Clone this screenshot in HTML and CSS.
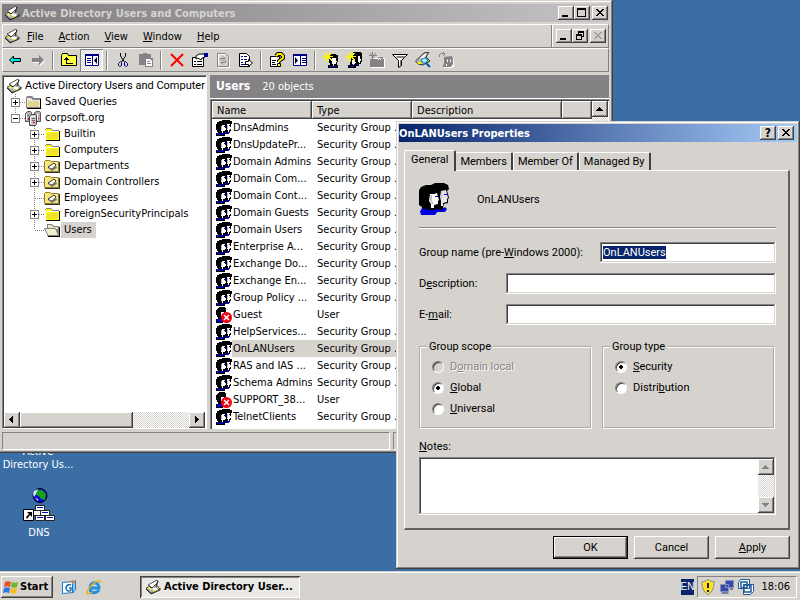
FILE: index.html
```html
<!DOCTYPE html>
<html lang="en">
<head>
<meta charset="utf-8">
<title>Active Directory Users and Computers</title>
<link rel="stylesheet" href="styles.css">
</head>
<body>
<svg class="sprites" aria-hidden="true">
  <symbol id="heads" viewBox="0 0 32 32">
    <path fill="#000" d="M12 2l4-2h9l4 2 1 4-2 2 1 3 1 4-1 1v4l-4 1-1 3 2 3-8 2-16 1 1-6-3-2-1-3V9l3-5 5-2z"/>
    <path fill="#fff" d="M11 11h4l3-1 1 4 1 3-1 1v3l-4 1v3h-3v-4l-2-3z"/>
    <path fill="#e7e3e7" d="M22 8l5-1 1 4 1 4-1 1v3l-4 1v3h-2v-5l-1-4z"/>
    <path fill="#c6c3c6" d="M11 12h2v6l2 3h-2l-2-4zM22 9h1v7h-1z"/>
    <path fill="#0000e0" d="M16 13h3v1h-3zM25 11h3v1h-3zM1 28l3-3 5 2h6l3-1 1 2-3 4H2zM19 26l4 1 3-3 2 2-2 3h-7z"/>
  </symbol>
  <symbol id="heads-small" viewBox="0 0 16 16">
    <path fill="#000" d="M3 1h3V0h8v1h2v3h-1v7h-1v2h-1v1H9v2H0v-3h2v-1H1v-2H0V4h1V2h2z"/>
    <path fill="#fff" d="M5 6h1V5h3v3h1v2H9v1H7v2H6v-2H5zM11 4h3v3h1v2h-1v1h-1v2h-1v-2h-1z"/>
    <path fill="#b5b6c6" d="M5 6h1v4H5zM11 5h1v4h-1z"/>
    <path fill="#0000d0" d="M1 13h2v1h3v-1h2v1H7v1H1zM8 6h1v1H8zM13 5h1v1h-1zM9 12h1v1H9zM10 13h1v-1h3v1h-1v1h-3z"/>
  </symbol>
  <symbol id="user-off" viewBox="0 0 16 16">
    <path fill="#000" d="M2 1h1V0h6v1h1v4H9v3H8v3H7v5H0v-4h2v-2H1V8H0V3h1V2h1z"/><path fill="#fff" d="M5 5h3v3H7v3H6V9H5z"/><path fill="#00c" d="M1 12h5v3H1z"/>
    <circle cx="10.500" cy="10.500" r="5.500" fill="#f00010"/><path stroke="#fff" stroke-width="1.500" d="M8 8l5 5M13 8l-5 5"/>
  </symbol>
  <symbol id="star" viewBox="0 0 10 10">
    <path fill="#f7f700" d="M4 0h1v3h1V2h1V1h2v1H8v1H7v1h3v1H7v1h1v1h1v2H8V8H7V7H6V6H5v4H4V7H3v1H2v1H1V8h1V7h1V6H0V4h3V3H2V2H1V1h1v1h2z"/>
  </symbol>
  <symbol id="aduc" viewBox="0 0 16 16">
    <path fill="#b5b6b5" stroke="#63615a" d="M1 9l5 5 9-4-4-5z"/>
    <path fill="#f5f24a" d="M3 9l4-3 2 2-4 3zM8 12l4-2 1 1-5 2z"/>
    <path fill="#fff" stroke="#555" d="M3 6l9-5 1 2-6 6z"/>
    <path stroke="#222" fill="none" d="M1 10l5 5 9-4V9M4 7l5 3M13 2l-2 6"/>
    <path fill="#fff" d="M7 9h5v2H8z"/>
  </symbol>
  <symbol id="folder" viewBox="0 0 16 16">
    <path fill="#848284" d="M2 2h5l2 2h6v1h1v9H1V3h1z"/><path fill="#000" d="M15 5h1v10H2v-1h13z"/>
    <path fill="#ffff00" d="M2 3h5l2 2h6v9H1V4z"/><path fill="#fff" d="M1 5h13v1H2v8H1z"/><path fill="#efe330" d="M3 7h11v6H3z"/>
  </symbol>
  <symbol id="folder-open" viewBox="0 0 16 16">
    <path fill="#848284" d="M3 2h5l2 2h5v10H3z"/><path fill="#f3f0cf" d="M1 7h11l3 7H4z"/><path fill="#e7e3c8" d="M4 3h4l1 2h5v2H4z"/><path fill="none" stroke="#848284" d="M.5 6.500h11l3 7H4z"/><path stroke="#000" d="M4 14.500h12M15.500 5v9"/>
  </symbol>
  <symbol id="folder-gray" viewBox="0 0 16 16">
    <path fill="#848284" d="M2 2h5l2 2h7v10H1V4z"/><path fill="#eeeadd" d="M2 4h4l2 2h7v7H2z"/><path fill="#ded78c" d="M3 7h11v6H3z"/><path stroke="#000" d="M2 14.500h14M15.500 5v9"/>
  </symbol>
  <symbol id="ou" viewBox="0 0 16 16">
    <path fill="#f7e77b" stroke="#8a7d30" d="M.5 3.500l1-1h4l2 1h7v10H.5z"/><path fill="#333" d="M1 14h15v1H1zM15 4h1v10h-1z"/>
    <path fill="#fff" stroke="#333" d="M4 9l6-4 2 2-4 5z"/><path fill="#777" d="M4 10l4 3 5-3-1-2-4 2z"/>
  </symbol>
  <symbol id="domain" viewBox="0 0 16 16">
    <path fill="#b5b2b5" stroke="#555" d="M.5 3.500l2-2h3l1 1v9h-6zM9.500 2.500l2-1h3l1 1v9h-6z"/>
    <path fill="#c6c3c6" stroke="#444" d="M4.500 6.500l2-2h4l1 1v9l-1 1h-6z"/>
    <path stroke="#fff" d="M1.500 4v6M5.500 7v7M12.500 4v6M6 6.500h4"/><path stroke="#666" d="M7 8.500h3M7 10.500h3M2 5.500h2"/><path fill="#e00" d="M3 8h1v2H3zM8 12h2v1H8zM13 8h1v1h-1z"/>
  </symbol>
  <symbol id="t-plus" viewBox="0 0 19 16">
    <path class="dots" d="M9.500 0v16M10 8.500h9"/><path class="box" d="M5.500 4.500h8v8h-8z"/><path class="sign" d="M7 8.500h5M9.500 6v5"/>
  </symbol>
  <symbol id="t-minus" viewBox="0 0 19 16">
    <path class="dots" d="M9.500 0v8M10 8.500h9"/><path class="box" d="M5.500 4.500h8v8h-8z"/><path class="sign" d="M7 8.500h5"/>
  </symbol>
  <symbol id="t-line" viewBox="0 0 19 16"><path class="dots" d="M9.500 0v16M10 8.500h9"/></symbol>
  <symbol id="t-last" viewBox="0 0 19 16"><path class="dots" d="M9.500 0v8M10 8.500h9"/></symbol>
  <symbol id="min" viewBox="0 0 12 10"><path fill="#000" d="M2 7h6v2H2z"/></symbol>
  <symbol id="max" viewBox="0 0 12 10"><path fill="#000" fill-rule="evenodd" d="M1 0h9v9H1zM2 2v6h7V2z"/></symbol>
  <symbol id="restore" viewBox="0 0 12 10"><path fill="#000" fill-rule="evenodd" d="M4 0h6v6H8v3H2V3h2zM5 2v1h3v2h1V2zM3 5v3h4V5z"/></symbol>
  <symbol id="close" viewBox="0 0 12 10"><path fill="currentColor" d="M2 1h2v1h1v1h2V2h1V1h2v1H9v1H8v1H7v1h1v1h1v1h1v1H8V7H7V6H5v1H4v1H2V7h1V6h1V5h1V4H4V3H3V2H2z"/></symbol>
  <symbol id="up" viewBox="0 0 8 8"><path fill="currentColor" d="M3 2h1v1h1v1h1v1h1v1H0V5h1V4h1V3h1z"/></symbol>
  <symbol id="down" viewBox="0 0 8 8"><path fill="currentColor" d="M0 2h7v1H6v1H5v1H4v1H3V5H2V4H1V3H0z"/></symbol>
  <symbol id="left" viewBox="0 0 8 8"><path fill="currentColor" d="M5 0v7H4V6H3V5H2V4H1V3h1V2h1V1h1V0z"/></symbol>
  <symbol id="right" viewBox="0 0 8 8"><path fill="currentColor" d="M2 0v7h1V6h1V5h1V4h1V3H5V2H4V1H3V0z"/></symbol>
</svg>

<main class="desktop">
  <a class="shortcut shortcut-ad" href="#ad">Active<br>Directory Us...</a>
  <a class="shortcut shortcut-dns" href="#dns">
    <svg width="32" height="34" viewBox="0 0 32 34">
      <circle cx="17" cy="7.500" r="7" fill="#1010d0" stroke="#001" /><path fill="#18a018" d="M14 2h5l4 4-1 6-4-1-2-3-3-1z"/><path fill="#cfeaff" d="M11 3l4-2-2 5-2 3-1-3zM12 10l3 1v2z"/>
      <path fill="#fff" stroke="#222" d="M12.500 17.500h9v5h-9zM8.500 22.500h9v5h-9zM17.500 22.500h9v5h-9zM12.500 27.500h9v5h-9zM22.500 27.500h9v5h-9z"/><path stroke="#0808a0" d="M14 19.500h6M19 24.500h6M14 29.500h6M24 29.500h6"/>
      <path fill="#fff" stroke="#000" d="M.5 21.500h10v11H.5z"/><path fill="#000" d="M4 24h5v5l-2-2-3 4-1-2 3-3z"/>
    </svg>
    DNS
  </a>

  <section class="window console" aria-label="Active Directory Users and Computers">
    <header class="titlebar inactive">
      <svg class="i16"><use href="#aduc"/></svg>
      <h1>Active Directory Users and Computers</h1>
      <button class="cap" aria-label="Minimize"><svg><use href="#min"/></svg></button>
      <button class="cap" aria-label="Maximize"><svg><use href="#max"/></svg></button>
      <button class="cap gap" aria-label="Close"><svg><use href="#close"/></svg></button>
    </header>
    <div class="band">
      <nav class="menu">
        <svg class="i16"><use href="#aduc"/></svg>
        <button><u>F</u>ile</button><button><u>A</u>ction</button><button><u>V</u>iew</button><button><u>W</u>indow</button><button><u>H</u>elp</button>
      </nav>
      <div class="mdi">
        <button class="cap" aria-label="Minimize child"><svg><use href="#min"/></svg></button>
        <button class="cap" aria-label="Restore child"><svg><use href="#restore"/></svg></button>
        <button class="cap gap" aria-label="Close child" disabled><svg><use href="#close"/></svg></button>
      </div>
    </div>
    <div class="band toolbar">
      <button aria-label="Back"><svg class="i16" viewBox="0 0 16 16"><path fill="#00e7e7" stroke="#000" d="M2.500 8l4-4v2.500h7v3h-7V12z"/></svg></button>
      <button aria-label="Forward"><svg class="i16" viewBox="0 0 16 16"><path fill="#fff" d="M15 9l-5 5v-3H3V7h7V5z"/><path fill="#848284" d="M14 8L9 3v3H2v4h7v3z"/></svg></button>
      <i></i>
      <button aria-label="Up one level"><svg class="i16" viewBox="0 0 16 16"><path fill="#ffff42" stroke="#000" d="M.5 3.500l1-2h5l1 2h8v10H.5z"/><path fill="#000" d="M5 5h1v1h1v1h1v1H6v3h6v1H5V8H3V7h1V6h1z"/></svg></button>
      <button class="pressed" aria-label="Show console tree" aria-pressed="true"><svg class="i16" viewBox="0 0 16 16"><path fill="#fff" stroke="#000084" d="M1.500 2.500h13v11h-13z"/><path fill="#000084" d="M1 2h14v2H1zM8 4h1v10H8zM3 6h4v1H3zM3 8h4v1H3zM3 10h4v1H3z"/><path d="M13 5v7L10 8.500z"/></svg></button>
      <i></i>
      <button aria-label="Cut"><svg class="i16" viewBox="0 0 16 16"><path fill="none" stroke="#000" d="M5.500 1v3l4 6M10.500 1v3l-4 6"/><path fill="none" stroke="#000084" d="M3.500 11.500l2-2 1 1v3l-2 1-1-1zM9.500 10.500l1-1 2 2v2l-1 1-2-1z"/></svg></button>
      <button aria-label="Paste" disabled><svg class="i16" viewBox="0 0 16 16"><path fill="#848284" d="M1 2h4V1h4v1h4v4h2v9H7v-2H1z"/><path fill="#fff" d="M8 7h4l2 2v5H8z"/><path stroke="#848284" d="M9 9.500h3M9 11.500h4"/></svg></button>
      <i></i>
      <button aria-label="Delete"><svg class="i16" viewBox="0 0 16 16"><path stroke="#f00" stroke-width="2" d="M2 2l12 12M14 2L2 14"/></svg></button>
      <button aria-label="Properties"><svg class="i16" viewBox="0 0 16 16"><path fill="#fff" stroke="#000" d="M.5 5.500h11v9H.5z"/><path stroke="#000" d="M2 9.500h2M5 9.500h5M2 12.500h2M5 12.500h5"/><path fill="#fff" stroke="#000" d="M4 4l3-2h5l1 3-3 1-1 2-3-2-2 1z"/><path fill="#0000a0" d="M12 1h4v4h-4z"/></svg></button>
      <button aria-label="Refresh" disabled><svg class="i16" viewBox="0 0 16 16"><path fill="none" stroke="#fff" d="M3.500 2.500h8l3 3v10h-11z"/><path fill="none" stroke="#848284" d="M2.500 1.500h8l3 3v10h-11zM5.500 8V6.500h4M10.500 8v2.500h-4M8 4.500l2 2-2 2M8 8.500l-2 2 2 2"/></svg></button>
      <button aria-label="Export list"><svg class="i16" viewBox="0 0 16 16"><path fill="#fff" stroke="#000" d="M1.500 1.500h7l3 3v10h-10z"/><path stroke="#000084" d="M3 4.500h2M6 4.500h3M3 7.500h2M6 7.500h3M3 10.500h2M3 12.500h5"/><path fill="#fff" stroke="#000" d="M7.500 9.500h3v-2l4 3.500-4 3.500v-2h-3z"/></svg></button>
      <i></i>
      <button aria-label="Help"><svg class="i16" viewBox="0 0 16 16"><path fill="#fff" stroke="#000" d="M1.500 4.500h9v10h-9z"/><path stroke="#000" d="M3 8.500h4M3 10.500h3M3 12.500h4"/><path fill="none" stroke="#000" stroke-width="4" d="M7 4l2-2h3l2 2v2l-4 3v1"/><path fill="none" stroke="#ffef00" stroke-width="2" d="M7 4l2-2h3l2 2v2l-4 3v1"/><path fill="#ff0" stroke="#000" d="M8.500 11.500h3v3h-3z"/></svg></button>
      <button aria-label="Show action pane"><svg class="i16" viewBox="0 0 16 16"><path fill="#fff" stroke="#000084" d="M1.500 2.500h13v11h-13z"/><path fill="#000084" d="M1 2h14v2H1zM8 4h1v10H8zM10 6h4v1h-4zM10 8h4v1h-4zM10 10h4v1h-4z"/><path d="M3 5v7l3-3.500z"/></svg></button>
      <i></i>
      <button aria-label="New user"><svg class="i16" viewBox="0 0 16 16"><path d="M6 2h7v1h2v7h-1v3h1v3H5v-3h2v-2H6z"/><path fill="#fff" d="M9 6h4v3h1v1h-1v2h-2v2h-1v-2H9z"/><path fill="#0000c0" d="M6 14h4v1h1v-1h3v1H6z"/><use href="#star" width="10" height="10"/></svg></button>
      <button aria-label="New group"><svg class="i16" viewBox="0 0 16 16"><path d="M7 0h8v1h1v9h-1v2h-2v2h-3v2H2v-3h2V5h3z"/><path fill="#fff" d="M12 4h2v3h1v2h-1v2h-1v-1h-1zM6 8h3v2h1v1H9v1H8v1H7v-1H6z"/><path fill="#0000c0" d="M3 14h5v1H3zM10 12h3v1h-3z"/><use href="#star" width="10" height="10"/></svg></button>
      <button aria-label="New organizational unit" disabled><svg class="i16" viewBox="0 0 16 16"><path fill="#fff" d="M5 6h11v10H2v-1h3z"/><path fill="#848284" d="M1 7h8l1-2h4v2h1v8H1zM3 0h1v8H3zM0 3h8v1H0z"/><path stroke="#848284" d="M1 1l5 5M7 1L2 6"/><path stroke="#fff" fill="none" d="M9 8l2-2 1 2"/></svg></button>
      <button aria-label="Filter"><svg class="i16" viewBox="0 0 16 16"><path fill="#fff" stroke="#000" d="M.5 2.500h15l-6 6v5l-3 2v-7z"/><path fill="#848284" d="M8 8h1v6H8zM4 4h10l-2 2H5z"/></svg></button>
      <button aria-label="Find"><svg class="i16" viewBox="0 0 16 16"><path fill="#b5b6b5" stroke="#333" d="M.5 9L9 1l5-1-3 5 4 4-7 4-5-1z"/><path fill="#fff" d="M5 6l5-4 2-1-3 5z"/><path fill="#ffe600" d="M2 10h5v2H3z"/><path fill="#aef" stroke="#07a" d="M6.500 8l2-2h3l1 3-2 2h-3z"/><path stroke="#0050d0" stroke-width="2" d="M11 11l4 4"/></svg></button>
      <button aria-label="Add to group" disabled><svg class="i16" viewBox="0 0 16 16"><path fill="#fff" d="M7 5h8v2h1v8h-2v1H6v-2h1z"/><path fill="none" stroke="#848284" d="M1.500 5V2.500l2-1h3M5 0l2 2-2 2"/><path fill="#848284" d="M6 5l8-1 1 3v5l-2 3H5v-2l1-1z"/><path fill="#fff" d="M9 8l1-1v3H9zM12 8l1-1v3h-1zM8 12h1v2H8z"/></svg></button>
    </div>

    <div class="panes">
      <div class="tree-pane">
        <ul class="tree">
          <li class="root"><svg class="i16"><use href="#aduc"/></svg><span>Active Directory Users and Computer</span></li>
          <li><svg class="tl"><use href="#t-plus"/></svg><svg class="i16"><use href="#folder-gray"/></svg><span>Saved Queries</span></li>
          <li><svg class="tl"><use href="#t-minus"/></svg><svg class="i16"><use href="#domain"/></svg><span>corpsoft.org</span></li>
        </ul>
        <ul class="tree sub">
          <li><svg class="tl"><use href="#t-plus"/></svg><svg class="i16"><use href="#folder"/></svg><span>Builtin</span></li>
          <li><svg class="tl"><use href="#t-plus"/></svg><svg class="i16"><use href="#folder"/></svg><span>Computers</span></li>
          <li><svg class="tl"><use href="#t-plus"/></svg><svg class="i16"><use href="#ou"/></svg><span>Departments</span></li>
          <li><svg class="tl"><use href="#t-plus"/></svg><svg class="i16"><use href="#ou"/></svg><span>Domain Controllers</span></li>
          <li><svg class="tl"><use href="#t-line"/></svg><svg class="i16"><use href="#ou"/></svg><span>Employees</span></li>
          <li><svg class="tl"><use href="#t-plus"/></svg><svg class="i16"><use href="#folder"/></svg><span>ForeignSecurityPrincipals</span></li>
          <li><svg class="tl"><use href="#t-last"/></svg><svg class="i16"><use href="#folder-open"/></svg><span class="selected">Users</span></li>
        </ul>
        <div class="hscroll">
          <button aria-label="Scroll left"><svg class="arrow"><use href="#left"/></svg></button>
          <div class="thumb"></div>
          <button aria-label="Scroll right"><svg class="arrow"><use href="#right"/></svg></button>
        </div>
      </div>
      <div class="list-pane">
        <div class="list-title"><strong>Users</strong><span>20 objects</span></div>
        <div class="list-box">
          <table>
            <colgroup><col class="c-icon"><col class="c-name"><col class="c-type"><col class="c-desc"><col></colgroup>
            <thead><tr><th colspan="2">Name</th><th>Type</th><th>Description</th><th></th></tr></thead>
            <tbody>
              <tr><td><svg class="i16"><use href="#heads-small"/></svg></td><td>DnsAdmins</td><td>Security Group ...</td></tr>
              <tr><td><svg class="i16"><use href="#heads-small"/></svg></td><td>DnsUpdatePr...</td><td>Security Group ...</td></tr>
              <tr><td><svg class="i16"><use href="#heads-small"/></svg></td><td>Domain Admins</td><td>Security Group ...</td></tr>
              <tr><td><svg class="i16"><use href="#heads-small"/></svg></td><td>Domain Com...</td><td>Security Group ...</td></tr>
              <tr><td><svg class="i16"><use href="#heads-small"/></svg></td><td>Domain Cont...</td><td>Security Group ...</td></tr>
              <tr><td><svg class="i16"><use href="#heads-small"/></svg></td><td>Domain Guests</td><td>Security Group ...</td></tr>
              <tr><td><svg class="i16"><use href="#heads-small"/></svg></td><td>Domain Users</td><td>Security Group ...</td></tr>
              <tr><td><svg class="i16"><use href="#heads-small"/></svg></td><td>Enterprise A...</td><td>Security Group ...</td></tr>
              <tr><td><svg class="i16"><use href="#heads-small"/></svg></td><td>Exchange Do...</td><td>Security Group ...</td></tr>
              <tr><td><svg class="i16"><use href="#heads-small"/></svg></td><td>Exchange En...</td><td>Security Group ...</td></tr>
              <tr><td><svg class="i16"><use href="#heads-small"/></svg></td><td>Group Policy ...</td><td>Security Group ...</td></tr>
              <tr><td><svg class="i16"><use href="#user-off"/></svg></td><td>Guest</td><td>User</td></tr>
              <tr><td><svg class="i16"><use href="#heads-small"/></svg></td><td>HelpServices...</td><td>Security Group ...</td></tr>
              <tr class="current"><td><svg class="i16"><use href="#heads-small"/></svg></td><td>OnLANUsers</td><td>Security Group ...</td></tr>
              <tr><td><svg class="i16"><use href="#heads-small"/></svg></td><td>RAS and IAS ...</td><td>Security Group ...</td></tr>
              <tr><td><svg class="i16"><use href="#heads-small"/></svg></td><td>Schema Admins</td><td>Security Group ...</td></tr>
              <tr><td><svg class="i16"><use href="#user-off"/></svg></td><td>SUPPORT_38...</td><td>User</td></tr>
              <tr><td><svg class="i16"><use href="#heads-small"/></svg></td><td>TelnetClients</td><td>Security Group ...</td></tr>
            </tbody>
          </table>
          <div class="vscroll"><button aria-label="Scroll list up"><svg class="arrow"><use href="#up"/></svg></button></div>
        </div>
      </div>
    </div>
    <footer class="status"><div></div><div></div></footer>
  </section>

  <form class="window dialog" aria-label="OnLANUsers Properties">
    <header class="titlebar">
      <h2>OnLANUsers Properties</h2>
      <button type="button" class="cap" aria-label="Help">?</button>
      <button type="button" class="cap gap" aria-label="Close dialog"><svg><use href="#close"/></svg></button>
    </header>
    <div class="dialog-body">
      <div class="tabs" role="tablist">
        <button type="button" role="tab" class="active" aria-selected="true">General</button>
        <button type="button" role="tab">Members</button>
        <button type="button" role="tab">Member Of</button>
        <button type="button" role="tab">Managed By</button>
      </div>
      <div class="page">
        <div class="identity"><svg><use href="#heads"/></svg><span>OnLANUsers</span></div>
        <div class="field"><label for="gname">Group name (pre-<u>W</u>indows 2000):</label><input class="short" id="gname" value="OnLANUsers"></div>
        <div class="field"><label for="desc">D<u>e</u>scription:</label><input id="desc"></div>
        <div class="field"><label for="mail">E-<u>m</u>ail:</label><input id="mail"></div>
        <div class="groups">
          <fieldset><legend>Group scope</legend>
            <label class="off"><input type="radio" name="scope" disabled>D<u>o</u>main local</label>
            <label><input type="radio" name="scope" checked><u>G</u>lobal</label>
            <label><input type="radio" name="scope"><u>U</u>niversal</label>
          </fieldset>
          <fieldset><legend>Group type</legend>
            <label><input type="radio" name="type" checked><u>S</u>ecurity</label>
            <label><input type="radio" name="type">Distri<u>b</u>ution</label>
          </fieldset>
        </div>
        <label class="notes-label" for="notes"><u>N</u>otes:</label>
        <div class="notes">
          <textarea id="notes"></textarea>
          <div class="vscroll">
            <button type="button" disabled aria-label="Scroll notes up"><svg class="arrow"><use href="#up"/></svg></button>
            <button type="button" disabled aria-label="Scroll notes down"><svg class="arrow"><use href="#down"/></svg></button>
          </div>
        </div>
      </div>
      <div class="actions">
        <button class="default">OK</button>
        <button type="button">Cancel</button>
        <button type="button"><u>A</u>pply</button>
      </div>
    </div>
  </form>
</main>

<footer class="taskbar">
  <button class="start"><svg class="i16" viewBox="0 0 16 16"><path fill="#e8501e" d="M2 3c2-1 4-1 6 0L7 8C5 7 3 7 1 8z"/><path fill="#6cb82c" d="M9 3c2 1 4 1 6 0l-1 5c-2 1-4 1-6 0z"/><path fill="#2f74e0" d="M1 9c2-1 4-1 6 0l-1 5c-2-1-4-1-6 0z"/><path fill="#f4c01c" d="M8 9c2 1 4 1 6 0l-1 5c-2 1-4 1-6 0z"/></svg>Start</button>
  <button class="quick" aria-label="Outlook Express"><svg class="i16" viewBox="0 0 16 16"><path fill="#fff" stroke="#1c78c8" d="M1.500 3.500l11-1v11l-11 1z"/><path fill="none" stroke="#1668c0" stroke-width="1.500" d="M10 6c-2-1-5 0-5 3s3 4 5 2v-2H8"/><path fill="#8cc8f4" stroke="#1c78c8" d="M11.500 4.500l3-3v9l-3 3z"/><path fill="#e08020" d="M10 2l2-1 2 2-3 2z"/></svg></button>
  <button class="quick" aria-label="Internet Explorer"><svg class="i16" viewBox="0 0 16 16"><path fill="none" stroke="#2090e0" stroke-width="3" d="M4 9h9c0-7-9-7-9 0s7 5 9 2"/><path fill="none" stroke="#f0b020" stroke-width="1.500" d="M15 4c0-4-4-2-8 1S-1 15 2 15s4-2 4-2"/></svg></button>
  <button class="task"><svg class="i16"><use href="#aduc"/></svg>Active Directory User...</button>
  <span class="lang">EN</span>
  <div class="tray">
    <svg class="i16" viewBox="0 0 16 16"><path fill="#ffe020" stroke="#7a8ca0" d="M8 .5c2 1.500 4 2 6 2 0 6-1 10-6 13-5-3-6-7-6-13 2 0 4-.5 6-2z"/><path fill="#222" d="M7 4h2v5H7zM7 11h2v2H7z"/></svg>
    <svg class="i16" viewBox="0 0 16 16"><path fill="#3848b0" stroke="#8890b0" d="M6.500 1.500h8v7h-8zM1.500 5.500h8v7h-8z"/><path fill="#7080a0" d="M3 13h6l1 2H2zM11 9h3v2h-3z"/></svg>
    <svg class="i16" viewBox="0 0 16 16"><path fill="#fff" stroke="#1c5c98" d="M.5 3.500l2-3h9v9h-11zM5.500 5.500h10v7l-3 3h-7z"/><path fill="none" stroke="#1c5c98" stroke-width="1.500" d="M3 3h6v6H3zM6 6h7v7H6z"/></svg>
    <time>18:06</time>
  </div>
</footer>
<script src="script.js"></script>
</body>
</html>
```
FILE: styles.css
```css
:root {
  --face: #d6d3ce;
  --shade: #848284;
  --dark: #424142;
  --navy: #08246b;
  --ui: "DejaVu Sans Condensed", "DejaVu Sans", sans-serif;
  --dlg: Roboto, "Liberation Sans", sans-serif;
  --raised: inset -1px -1px var(--dark), inset 1px 1px #fff, inset -2px -2px var(--shade);
  --sunken: inset -1px -1px #fff, inset 1px 1px var(--shade), inset -2px -2px var(--face), inset 2px 2px var(--dark);
  --dither: repeating-conic-gradient(#fff 0 25%, var(--face) 0 50%) 0 0 / 2px 2px;
}
* { box-sizing: border-box; }
body {
  margin: 0;
  height: 100vh;
  display: flex;
  flex-direction: column;
  overflow: hidden;
  background: #3a6ea5;
  font: 11px/13px var(--ui);
  color: #000;
}
button { font: inherit; color: inherit; background: var(--face); border: 0; padding: 0; border-radius: 0; }
svg { display: block; flex: none; }
.sprites { position: absolute; width: 0; height: 0; }
.i16 { width: 16px; height: 16px; }
.arrow { width: 8px; height: 8px; shape-rendering: crispEdges; }

.desktop { position: relative; flex: 1; }
.shortcut {
  position: absolute;
  left: 0;
  width: 76px;
  display: flex;
  flex-direction: column;
  align-items: center;
  gap: 4px;
  color: #fff;
  text-align: center;
  text-decoration: none;
  white-space: nowrap;
}
.shortcut-ad { top: 445px; display: block; }
.shortcut-dns { top: 488px; width: 78px; }

.window { position: absolute; background: var(--face); box-shadow: inset -1px -1px var(--dark), inset 1px 1px var(--face), inset -2px -2px var(--shade), inset 2px 2px #fff; }
.titlebar { height: 18px; display: flex; align-items: center; padding: 0 3px 0 2px; color: #fff; background: linear-gradient(90deg, #08246b, #a5cbf7); }
.titlebar h1, .titlebar h2 { flex: 1; margin: 0; font-size: 11px; line-height: 13px; white-space: nowrap; }
.titlebar.inactive { color: #d6d3ce; background: linear-gradient(90deg, #7f7d7f, #c6c3c6); padding: 0 1px 0 2px; }
.titlebar h1 { padding-left: 2px; }
.cap { width: 16px; height: 14px; display: grid; place-items: center; box-shadow: var(--raised); color: #000; font-weight: bold; font-size: 12px; }
.cap.gap { margin-left: 2px; }
.cap svg { width: 12px; height: 10px; shape-rendering: crispEdges; }
.cap:disabled { color: #a09e9a; }

.console { top: 0; left: -2px; right: 187px; padding: 4px 4px 3px; }
.band { height: 24px; display: flex; border: 1px solid var(--shade); border-color: #fff var(--shade) var(--shade) #fff; }
.titlebar + .band { margin-top: 2px; }
.menu { flex: 1; display: flex; align-items: center; gap: 15px; padding-left: 1px; }
.menu svg { margin-right: -8px; }
.mdi { display: flex; align-items: center; padding: 0 2px 0 4px; border-left: 1px solid var(--shade); box-shadow: inset 1px 0 #fff; }
.toolbar { align-items: center; }
.toolbar button { width: 23px; height: 22px; display: grid; place-items: center; }
.toolbar .pressed { background: var(--dither); box-shadow: inset 1px 1px var(--shade), inset -1px -1px #fff; }
.toolbar i { width: 2px; height: 19px; margin: 0 3px; border-left: 1px solid var(--shade); border-right: 1px solid #fff; }

.panes { display: flex; gap: 3px; padding-top: 3px; }
.tree-pane { width: 205px; flex: none; display: flex; flex-direction: column; background: #fff; border: 1px solid var(--shade); border-color: var(--shade) #fff #fff var(--shade); padding: 2px 1px 0; overflow: hidden; box-shadow: inset 1px 1px var(--dark); }
.tree { list-style: none; margin: 0; padding: 0 0 0 2px; }
.tree li { display: flex; align-items: center; height: 16px; white-space: nowrap; }
.tree li span { margin-left: 1px; padding: 1px 3px 2px; }
.tree li.root span { margin: 0; padding: 1px 0 2px 3px; font-family: var(--dlg); }
.tree.sub { padding-left: 21px; flex: 1; }
.tree .selected { background: var(--face); padding-right: 4px; }
.tl { width: 19px; height: 16px; shape-rendering: crispEdges; }
.dots { stroke: #848284; stroke-dasharray: 1 1; }
.box { fill: #fff; stroke: #848284; }
.sign { stroke: #000; }
.hscroll, .vscroll { display: flex; background: var(--dither); }
.hscroll button, .vscroll button { width: 16px; height: 16px; display: grid; place-items: center; box-shadow: var(--raised); }
.hscroll .thumb { width: 113px; background: var(--face); box-shadow: var(--raised); }
.hscroll button:last-child { margin-left: auto; }
.vscroll { width: 16px; flex-direction: column; justify-content: space-between; }
.vscroll button:disabled { color: var(--shade); }

.list-pane { flex: 1; min-width: 0; }
.list-title { height: 24px; display: flex; align-items: center; gap: 12px; padding-left: 6px; background: #848284; color: #fff; border-bottom: 1px solid #fff; }
.list-title strong { font-size: 12px; }
.list-box { display: flex; padding: 2px 1px 4px 2px; background: #fff; box-shadow: inset 1px 1px var(--shade), inset 2px 2px var(--dark), inset -1px -1px #fff; }
.list-box table { flex: 1; min-width: 0; border-collapse: collapse; table-layout: fixed; width: 100%; }
.c-icon { width: 20px; }
.c-name { width: 80px; }
.c-type { width: 100px; }
.c-desc { width: 150px; }
th { height: 18px; padding: 1px 5px 0; background: var(--face); box-shadow: var(--raised); font-weight: normal; text-align: left; }
td { height: 17px; padding: 0 0 0 5px; white-space: nowrap; overflow: hidden; }
td:first-child { padding: 0 0 0 4px; }
td:nth-child(2) { padding-left: 1px; }
.current td { background: var(--face); }
.current td:first-child { background: #fff; }

.status { display: flex; gap: 3px; padding-top: 3px; }
.status div { height: 18px; width: 388px; border: 1px solid var(--shade); border-color: var(--shade) #fff #fff var(--shade); }
.status div + div { flex: 1; width: auto; }

.dialog { top: 121px; right: 0; width: 404px; padding: 3px; font-family: var(--dlg); }
.dialog .titlebar { font-family: var(--ui); padding: 0 3px 0 0; }
.dialog-body { padding: 8px 7px 7px 5px; }
.tabs { display: flex; align-items: flex-end; height: 20px; padding-left: 2px; }
.tabs button { height: 18px; padding: 0 4px; border: solid; border-width: 1px 2px 0 1px; border-color: #fff var(--dark) #fff #fff; border-radius: 2px 2px 0 0; }
.tabs .active { position: relative; height: 21px; margin: 0 -1px -1px -2px; padding: 0 6px 3px; background: var(--face); }
.page { border: solid; border-width: 1px 2px 2px 1px; border-color: #fff #63615f #63615f #fff; padding: 12px 12px 13px 14px; }
.identity { display: flex; align-items: center; gap: 26px; padding-bottom: 12px; border-bottom: 1px solid var(--shade); box-shadow: 0 1px #fff; margin-bottom: 14px; }
.identity svg { width: 32px; height: 32px; }
.field { display: flex; align-items: center; justify-content: space-between; margin-bottom: 10px; }
.field input { width: 270px; height: 21px; padding: 0 3px; border: 0; background: #fff; box-shadow: var(--sunken); font: 11px/13px var(--dlg); outline: 0; }
.field .short { width: 176px; }
::selection { background: var(--navy); color: #fff; }
.groups { display: flex; gap: 10px; margin: 15px 1px 0 0; }
fieldset { flex: 1; height: 89px; margin: 0; padding: 3px 10px 0 11px; border: 2px groove #fff; }
legend { padding: 0 2px; margin-left: -5px; }
fieldset label { display: flex; align-items: center; height: 21px; white-space: pre; }
fieldset input { appearance: none; width: 12px; height: 12px; margin: 0 6px 0 0; border-radius: 50%; border: 1px solid; border-color: var(--shade) #fff #fff var(--shade); background: #fff; box-shadow: inset 1px 1px var(--dark); }
fieldset input:checked { background: radial-gradient(circle, #000 0 2px, #fff 2px); }
fieldset input:disabled { background: var(--face); }
.off { color: var(--shade); text-shadow: 1px 1px #fff; }
.notes-label { display: block; margin: 11px 0 4px; }
.notes { display: flex; height: 58px; padding: 2px; background: #fff; box-shadow: var(--sunken); }
.notes textarea { flex: 1; border: 0; resize: none; outline: 0; background: #fff; font: inherit; }
.actions { display: flex; justify-content: flex-end; gap: 6px; padding-top: 6px; }
.actions button { width: 75px; height: 23px; box-shadow: var(--raised); }
.actions .default { border: 1px solid #000; }

.taskbar { flex: none; height: 29px; display: flex; align-items: center; padding: 3px 3px 1px 1px; background: var(--face); box-shadow: inset 0 1px var(--face), inset 0 2px #fff; }
.taskbar button { display: flex; align-items: center; height: 22px; }
.start { width: 52px; padding: 0 2px; gap: 1px; font-weight: bold; box-shadow: var(--raised); }
.quick { margin-left: 8px; }
.quick + .quick { margin-left: 9px; }
.task { width: 160px; margin-left: 38px; padding-left: 5px; gap: 3px; font-weight: bold; white-space: nowrap; box-shadow: inset 1px 1px var(--dark), inset -1px -1px #fff, inset 2px 2px var(--shade); }
.taskbar .task { background: #ebe9e6; }
.lang { margin-left: auto; height: 16px; line-height: 16px; background: var(--navy); color: #fff; font-family: "Liberation Sans", sans-serif; font-size: 10px; }
.tray { margin-left: 3px; height: 22px; display: flex; align-items: center; gap: 3px; padding: 0 6px 0 2px; border: 1px solid var(--shade); border-color: var(--shade) #fff #fff var(--shade); }
.tray time { margin-left: 4px; }
```
FILE: script.js
```js
const groupName = document.getElementById("gname");
groupName.focus();
groupName.select();
```
